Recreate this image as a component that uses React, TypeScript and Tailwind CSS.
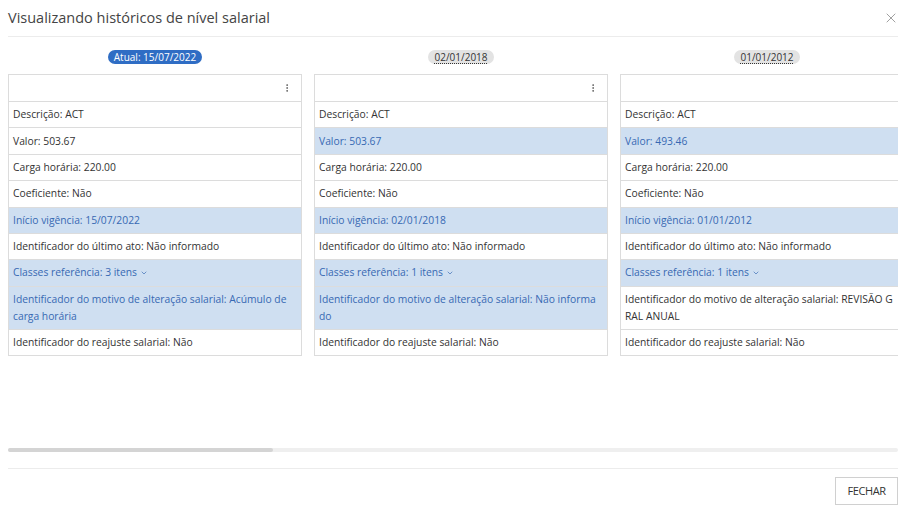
import { ChevronDown, EllipsisVertical, X } from 'lucide-react';

type Row = { lines: string[]; hl?: boolean; chevron?: boolean };
type Col = { date: string; current?: boolean; rows: Row[] };

const makeRows = (
  valor: string,
  valorHl: boolean,
  inicio: string,
  classes: string,
  motivo: string[],
  motivoHl: boolean
): Row[] => [
  { lines: ['Descrição: ACT'] },
  { lines: [`Valor: ${valor}`], hl: valorHl },
  { lines: ['Carga horária: 220.00'] },
  { lines: ['Coeficiente: Não'] },
  { lines: [`Início vigência: ${inicio}`], hl: true },
  { lines: ['Identificador do último ato: Não informado'] },
  { lines: [`Classes referência: ${classes}`], hl: true, chevron: true },
  { lines: motivo, hl: motivoHl },
  { lines: ['Identificador do reajuste salarial: Não'] },
];

const cols: Col[] = [
  {
    date: 'Atual: 15/07/2022',
    current: true,
    rows: makeRows('503.67', false, '15/07/2022', '3 itens', ['Identificador do motivo de alteração salarial: Acúmulo de', 'carga horária'], true),
  },
  {
    date: '02/01/2018',
    rows: makeRows('503.67', true, '02/01/2018', '1 itens', ['Identificador do motivo de alteração salarial: Não informa', 'do'], true),
  },
  {
    date: '01/01/2012',
    rows: makeRows('493.46', true, '01/01/2012', '1 itens', ['Identificador do motivo de alteração salarial: REVISÃO G', 'RAL ANUAL'], false),
  },
];

function HistoryColumn({ col }: { col: Col }) {
  return (
    <div className="w-[294px] shrink-0 flex flex-col items-center">
      {col.current ? (
        <span className="h-[14px] px-[6px] rounded-full bg-[#2f6dc4] text-white text-[10px] leading-[14px]">
          {col.date}
        </span>
      ) : (
        <span className="h-[14px] px-[6px] rounded-full bg-[#e3e3e3] text-[#333] text-[10px] leading-[14px] underline decoration-dotted underline-offset-2">
          {col.date}
        </span>
      )}
      <div className="mt-[10px] w-full border border-[#dcdcdc] bg-white">
        <div className="h-[27px] border-b border-[#dcdcdc] flex items-center justify-end pr-[9px]">
          <EllipsisVertical size={10} className="text-[#555]" />
        </div>
        {col.rows.map((r, i) => (
          <div
            key={i}
            className={`px-1 py-[4.2px] text-[10.3px] leading-[17px] whitespace-nowrap ${
              i < col.rows.length - 1 ? 'border-b border-[#dcdcdc]' : ''
            } ${r.hl ? 'bg-[#cfdff1] text-[#3769b3]' : 'text-[#333]'}`}
          >
            {r.lines.map((l, j) => (
              <div key={j} className="flex items-center gap-[3px]">
                {l}
                {r.chevron && <ChevronDown size={8} strokeWidth={2} />}
              </div>
            ))}
          </div>
        ))}
      </div>
    </div>
  );
}

export default function App() {
  return (
    <div
      className="w-[906px] h-[513px] bg-white overflow-hidden px-2"
      style={{ fontFamily: '"Open Sans", sans-serif' }}
    >
      {/* Header */}
      <div className="h-[37px] border-b border-[#ececec] flex items-center justify-between">
        <h1 className="text-[14.5px] text-[#444]">Visualizando históricos de nível salarial</h1>
        <X size={16} strokeWidth={1.5} className="text-[#a0a0a0] -mr-[1px]" />
      </div>

      {/* Columns */}
      <div className="h-[411px] overflow-hidden">
        <div className="pt-[13px] flex gap-[12px]">
          {cols.map((c) => (
            <HistoryColumn key={c.date} col={c} />
          ))}
        </div>
      </div>

      {/* Scrollbar */}
      <div className="h-[4px] bg-[#efefef] rounded-full">
        <div className="h-full w-[265px] bg-[#d4d4d4] rounded-full" />
      </div>

      {/* Footer */}
      <div className="mt-[16px] border-t border-[#ececec] pt-[8px] flex justify-end">
        <button className="h-[28px] w-[63px] border border-[#d0d0d0] bg-white text-[11px] text-[#333] tracking-[-0.4px]">
          FECHAR
        </button>
      </div>
    </div>
  );
}
